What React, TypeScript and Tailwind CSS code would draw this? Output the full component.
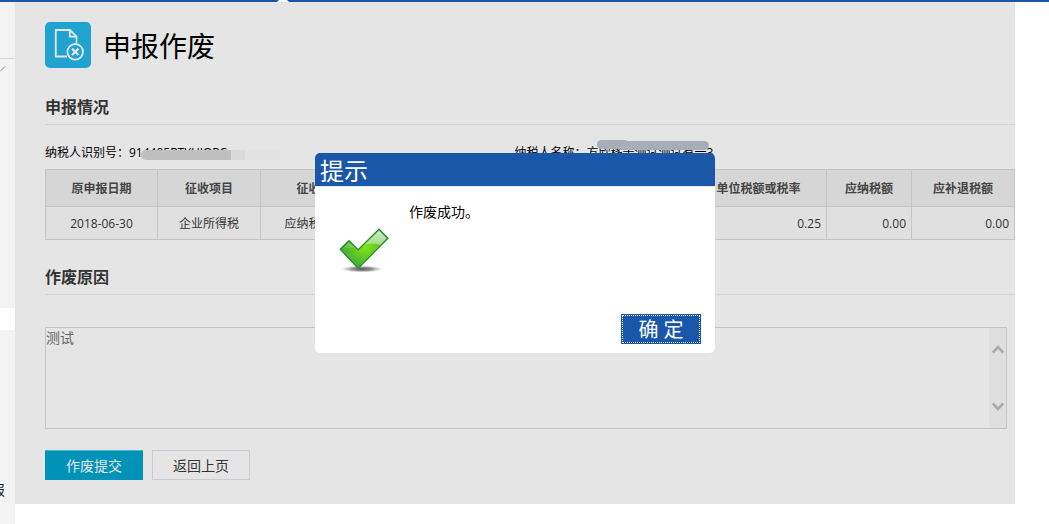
import { useState } from 'react'

const columns = [
  { label: '原申报日期', value: '2018-06-30', width: 'w-[112px]', align: 'text-center' },
  { label: '征收项目', value: '企业所得税', width: 'w-[103px]', align: 'text-center' },
  { label: '征收品目', value: '应纳税所得额', width: 'w-[120px]', align: 'text-center' },
  { label: '计税依据', value: '0.00', width: '', align: 'text-right' },
  { label: '单位税额或税率', value: '0.25', width: 'w-[136px]', align: 'text-right' },
  { label: '应纳税额', value: '0.00', width: 'w-[85px]', align: 'text-right' },
  { label: '应补退税额', value: '0.00', width: 'w-[103px]', align: 'text-right' },
]

function VoidIcon() {
  return (
    <svg viewBox="0 0 46 46" className="size-[46px]" fill="none" aria-hidden="true">
      <rect width="46" height="46" rx="5" fill="#20a3d0" />
      <path d="M22 34.5H10.8V8H25l6.5 6.5V21" stroke="#e2e9ec" strokeWidth="1.8" />
      <path d="M24.8 8v6.7h6.7" stroke="#e2e9ec" strokeWidth="1.8" />
      <circle cx="30.2" cy="29.8" r="7.8" fill="#20a3d0" stroke="#e2e9ec" strokeWidth="1.8" />
      <path d="m27 26.6 6.4 6.4m0-6.4L27 33" stroke="#e2e9ec" strokeWidth="2.2" />
    </svg>
  )
}

function CheckIcon() {
  return (
    <svg viewBox="0 0 50 46" className="h-[46px] w-[50px] shrink-0" aria-hidden="true">
      <defs>
        <radialGradient id="leaf" cx="0.54" cy="0.47" r="0.5">
          <stop offset="0" stopColor="#80e414" />
          <stop offset="1" stopColor="#44ad38" />
        </radialGradient>
        <linearGradient id="shine" x1="1" y1="0" x2="0.3" y2="1">
          <stop offset="0" stopColor="#fff" stopOpacity="0.8" />
          <stop offset="1" stopColor="#fff" stopOpacity="0.15" />
        </linearGradient>
        <radialGradient id="shadow">
          <stop offset="0" stopColor="#555" />
          <stop offset="0.5" stopColor="#777" stopOpacity="0.8" />
          <stop offset="1" stopColor="#aaa" stopOpacity="0" />
        </radialGradient>
      </defs>
      <ellipse cx="23" cy="42" rx="21" ry="3.5" fill="url(#shadow)" />
      <path d="M1.2 22.3 10 13.7l9.2 9L40 2l9 9.3-29.8 30z" fill="url(#leaf)" stroke="#1f8a2c" strokeWidth="1.2" />
      <path d="m3 22 7-7 6 6q-6-1-13 1M25 18 40 3.500l7.500 7.800L41 18q-7-3-16 0" fill="url(#shine)" />
    </svg>
  )
}

function SectionTitle({ children }: { children: string }) {
  return (
    <h2 className="border-b border-[#d2d2d2] pb-1 text-base leading-[26px] font-bold text-[#333]">{children}</h2>
  )
}

function Sidebar() {
  return (
    <aside className="flex w-[15px] shrink-0 flex-col overflow-hidden">
      <div className="h-[306px] bg-[#f3f3f3]">
        <div className="h-[57px] border-b border-[#d9d9d9]" />
        <svg viewBox="0 0 6 8" className="mt-1.5 h-2 w-1.5" fill="none" aria-hidden="true">
          <path d="M0 6.500 5 1.500" stroke="#888" />
        </svg>
      </div>
      <div className="mt-[22px] flex grow justify-end bg-[#f3f3f3] pt-[150px] pr-2.5">
        <span className="text-sm leading-5 whitespace-nowrap text-[#222]">报</span>
      </div>
    </aside>
  )
}

function ResultDialog({ onClose }: { onClose: () => void }) {
  return (
    <div className="absolute inset-0 flex items-center justify-center">
      <div role="dialog" aria-labelledby="dialog-title" className="flex h-[200px] w-[400px] flex-col overflow-hidden rounded-[5px] bg-white">
        <h3 id="dialog-title" className="bg-[#1a57a9] px-[5px] pt-[3px] text-2xl leading-[30px] text-white">
          提示
        </h3>
        <div className="flex grow items-start gap-5 border-t border-[#e8e8e8] px-6 pt-4">
          <div className="pt-6">
            <CheckIcon />
          </div>
          <p className="text-sm leading-[18px] text-black">作废成功。</p>
        </div>
        <div className="flex justify-end pr-3.5 pb-[9px]">
          <button
            type="button"
            onClick={onClose}
            className="h-[30px] w-20 border border-[#1a57a9] bg-[#1a57a9] text-xl text-white"
          >
            <span className="flex h-full items-center justify-center border border-dotted border-white pt-0.5">
              确 定
            </span>
          </button>
        </div>
      </div>
    </div>
  )
}

export default function App() {
  const [open, setOpen] = useState(true)
  const [reason, setReason] = useState('测试')

  return (
    <div className="flex min-h-screen flex-col bg-white font-['Open_Sans','Noto_Sans_CJK_SC',sans-serif]">
      <div className="h-0.5 bg-[#1a57a9] pl-[277px]">
        <svg viewBox="0 0 12 2" className="h-0.5 w-3" aria-hidden="true">
          <path d="M0 2 2 0h8l2 2z" fill="#fff" />
        </svg>
      </div>
      <div className="flex grow">
        <Sidebar />
        <main className="relative mr-[34px] min-w-0 flex-1 self-start bg-[#e5e5e5] pt-5 pb-6 pl-[30px]">
          <header className="mb-6 flex items-start gap-3">
            <VoidIcon />
            <h1 className="text-[28px] leading-[48px] text-black">申报作废</h1>
          </header>

          <SectionTitle>申报情况</SectionTitle>
          <div className="flex pt-5 pb-2 text-xs leading-4 text-black">
            <p className="relative w-[48%] grow-0">
              纳税人识别号：914405RTYUIOPC
              <span className="absolute top-[5px] left-24 flex h-2.5">
                <span className="w-[90px] rounded-l-full bg-[#bfbfbf]" />
                <span className="w-3.5 bg-[#dadada]" />
                <span className="w-9 rounded-r-full bg-[#e2e2e2]" />
              </span>
            </p>
            <p className="relative ml-1">
              纳税人名称：方欣移壬测试测试有一3
              <span className="absolute -top-[5px] left-[82px] flex w-28">
                <span className="h-[9px] w-8 rounded-full bg-[#a6aeb9]" />
                <span className="-ml-3 mt-px h-[9px] grow rounded-full bg-[#a6aeb9]" />
              </span>
            </p>
          </div>

          <table className="w-full table-fixed border-collapse text-xs text-[#333]">
            <thead>
              <tr className="h-[37px] bg-[#d6d6d6]">
                {columns.map((c) => (
                  <th key={c.label} className={`border border-[#c5c5c5] pt-0.5 font-bold text-[#444] ${c.width}`}>
                    {c.label}
                  </th>
                ))}
              </tr>
            </thead>
            <tbody>
              <tr className="h-[33px] bg-[#e0e0e0]">
                {columns.map((c) => (
                  <td key={c.label} className={`border border-[#c5c5c5] px-[5px] pt-0.5 whitespace-nowrap ${c.align}`}>
                    {c.value}
                  </td>
                ))}
              </tr>
            </tbody>
          </table>

          <div className="pt-6">
            <SectionTitle>作废原因</SectionTitle>
          </div>
          <div className="mt-8 mr-2 flex h-[102px] border border-[#c5c5c5]">
            <textarea
              aria-label="作废原因"
              value={reason}
              onChange={(e) => setReason(e.target.value)}
              className="grow resize-none bg-transparent text-sm leading-5 text-[#666] outline-none"
            />
            <div className="flex w-[17px] flex-col items-center justify-between bg-[#dfdfdf] py-4" aria-hidden="true">
              <svg viewBox="0 0 12 10" className="h-2.5 w-3" fill="none">
                <path d="m.8 8.500 5.200-5.500 5.200 5.500" stroke="#ababab" strokeWidth="2.600" />
              </svg>
              <svg viewBox="0 0 12 10" className="h-2.5 w-3" fill="none">
                <path d="M.8 1.500 6 7l5.200-5.500" stroke="#ababab" strokeWidth="2.600" />
              </svg>
            </div>
          </div>

          <div className="mt-[21px] flex gap-[9px] text-sm">
            <button type="button" className="h-[30px] w-[98px] border-t border-[#4db3cc] bg-[#0093b8] text-[#e5e5e5]">
              作废提交
            </button>
            <button type="button" className="h-[30px] w-[98px] border border-[#c9ccd2] pt-px text-[#333]">
              返回上页
            </button>
          </div>

          {open && <ResultDialog onClose={() => setOpen(false)} />}
        </main>
      </div>
    </div>
  )
}
